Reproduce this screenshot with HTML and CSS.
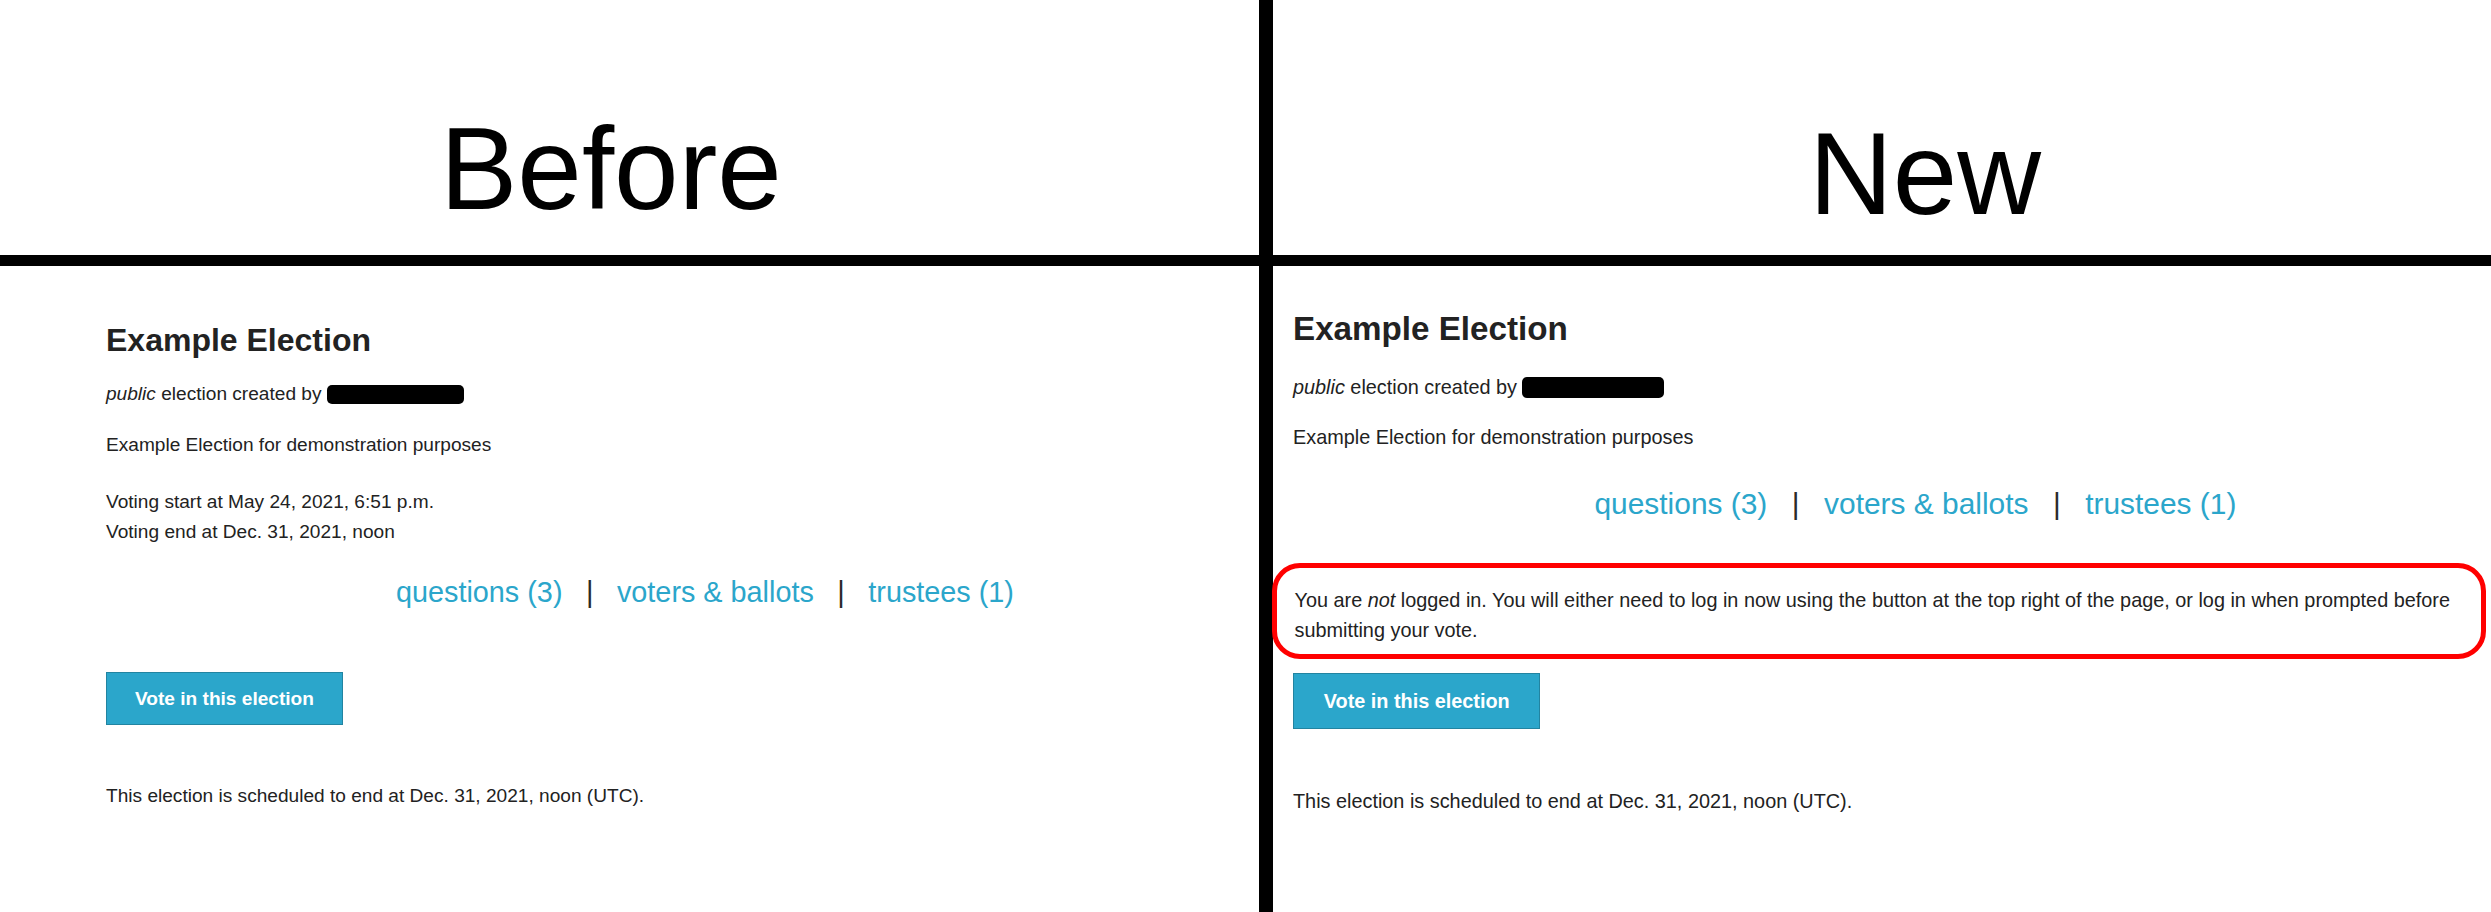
FILE: index.html
```html
<!DOCTYPE html>
<html lang="en">
<head>
<meta charset="utf-8">
<title>Before / New</title>
<link rel="stylesheet" href="styles.css">
</head>
<body>
<div class="compare">
  <div class="head head-before"><span class="head-label">Before</span></div>
  <div class="vline"></div>
  <div class="head head-new"><span class="head-label">New</span></div>
  <div class="hline"></div>

  <section class="panel panel-before">
    <h1 class="title">Example Election</h1>
    <p class="meta"><em>public</em> election created by <span class="redact"></span></p>
    <p class="desc">Example Election for demonstration purposes</p>
    <p class="dates">Voting start at May 24, 2021, 6:51 p.m.<br>Voting end at Dec. 31, 2021, noon</p>
    <div class="links">
      <a href="#">questions (3)</a>
      <span class="sep">|</span>
      <a href="#">voters &amp; ballots</a>
      <span class="sep">|</span>
      <a href="#">trustees (1)</a>
    </div>
    <div class="actions"><button class="vote-btn" type="button">Vote in this election</button></div>
    <p class="end">This election is scheduled to end at Dec. 31, 2021, noon (UTC).</p>
  </section>

  <section class="panel panel-new">
    <h1 class="title">Example Election</h1>
    <p class="meta"><em>public</em> election created by <span class="redact"></span></p>
    <p class="desc">Example Election for demonstration purposes</p>
    <div class="links">
      <a href="#">questions (3)</a>
      <span class="sep">|</span>
      <a href="#">voters &amp; ballots</a>
      <span class="sep">|</span>
      <a href="#">trustees (1)</a>
    </div>
    <div class="notice">
      <p>You are <em>not</em> logged in. You will either need to log in now using the button at the top right of the page, or log in when prompted before submitting your vote.</p>
    </div>
    <div class="actions"><button class="vote-btn" type="button">Vote in this election</button></div>
    <p class="end">This election is scheduled to end at Dec. 31, 2021, noon (UTC).</p>
  </section>
</div>
</body>
</html>
```

FILE: styles.css
```css
html, body {
  margin: 0;
  padding: 0;
  background: #fff;
}

body {
  font-family: "Liberation Sans", Arial, sans-serif;
  color: #222;
  overflow: hidden;
}

.compare {
  display: grid;
  grid-template-columns: 1259px 14px 1fr;
  grid-template-rows: 255px 11px 1fr;
  height: 912px;
}

.vline {
  grid-column: 2;
  grid-row: 1 / 4;
  background: #000;
}

.hline {
  grid-column: 1 / 4;
  grid-row: 2;
  background: #000;
}

.head {
  grid-row: 1;
  color: #000;
  font-size: 116px;
  line-height: 116px;
}

.head-before {
  grid-column: 1;
  padding: 111px 0 0 440px;
}

.head-new {
  grid-column: 3;
  padding: 116px 0 0 536px;
}

.head-label {
  display: block;
}

.panel {
  grid-row: 3;
  line-height: 30px;
}

.panel p {
  margin: 0;
}

.panel-before {
  grid-column: 1;
  font-size: 19.1px;
  padding: 55px 0 0 106px;
}

.panel-new {
  grid-column: 3;
  font-size: 19.85px;
  padding: 42.5px 0 0 20px;
}

.title {
  margin: 0;
  font-weight: bold;
  color: #222;
}

.panel-before .title {
  font-size: 32px;
  line-height: 38px;
}

.panel-new .title {
  font-size: 33.2px;
  line-height: 40px;
}

.redact {
  display: inline-block;
  background: #000;
  border-radius: 5px;
  vertical-align: -4px;
}

.panel-before .redact {
  width: 137px;
  height: 19px;
}

.panel-new .redact {
  width: 142px;
  height: 21px;
}

.panel-before .meta { margin-top: 20px; }
.panel-before .desc { margin-top: 21px; }
.panel-before .dates { margin-top: 27px; }

.panel-new .meta { margin-top: 23px; }
.panel-new .desc { margin-top: 20px; }

.links {
  display: flex;
  align-items: baseline;
}

.links a {
  color: #2ba6cb;
  text-decoration: none;
}

.links .sep {
  color: #2a2a2a;
}

.panel-before .links {
  font-size: 28.8px;
  line-height: 35px;
  margin-top: 27.5px;
  padding-left: 290px;
  gap: 23.5px;
}

.panel-new .links {
  font-size: 29.9px;
  line-height: 36px;
  margin-top: 34.5px;
  padding-left: 301.5px;
  gap: 24.5px;
}

.notice {
  margin: 41px 5px 0 -21px;
  border: 5px solid #ff0000;
  border-radius: 28px;
  padding: 17.4px 10px 8.6px 17.5px;
}

.actions {
  display: flex;
}

.vote-btn {
  font-family: "Liberation Sans", Arial, sans-serif;
  font-weight: bold;
  color: #fff;
  background: #2ba6cb;
  border: 1px solid #2284a1;
  border-radius: 0;
  margin: 0;
  cursor: pointer;
}

.panel-before .vote-btn {
  font-size: 19.1px;
  height: 53px;
  line-height: 51px;
  padding: 0 28px;
}

.panel-new .vote-btn {
  font-size: 19.85px;
  height: 56px;
  line-height: 54px;
  padding: 0 29.75px;
}

.panel-before .actions { margin-top: 62px; }
.panel-new .actions { margin-top: 13.7px; }

.panel-before .end { margin-top: 56px; }
.panel-new .end { margin-top: 57.4px; }
```
